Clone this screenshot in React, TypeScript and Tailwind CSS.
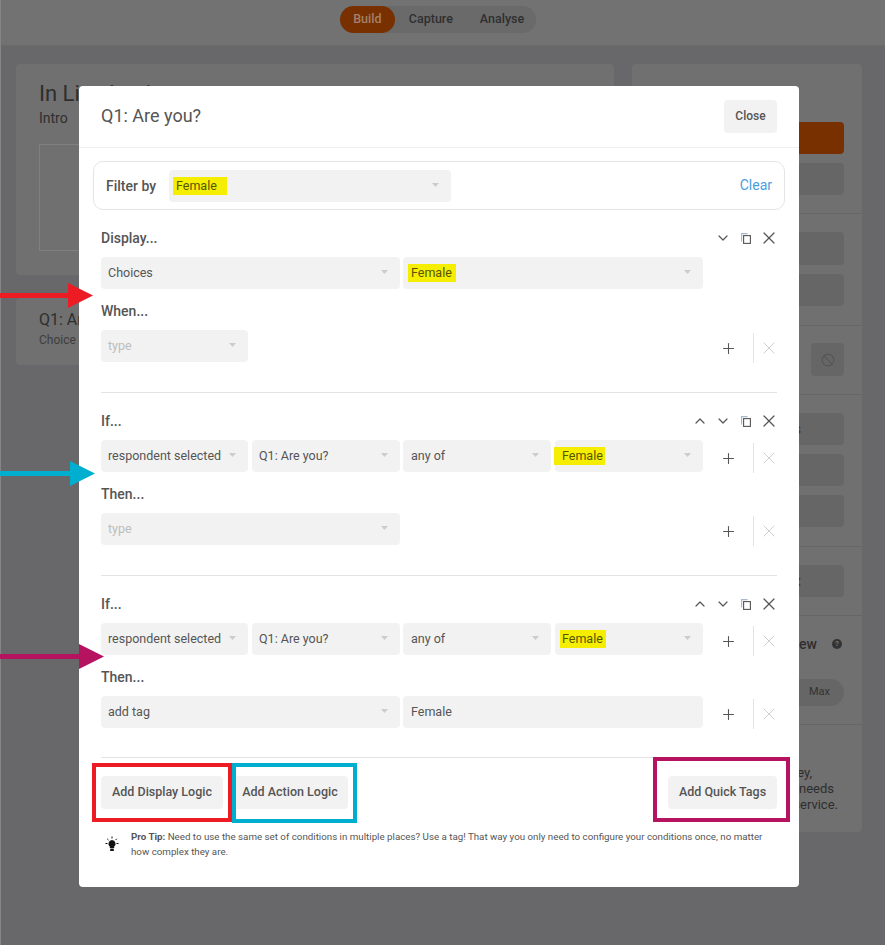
// App.tsx
import { ChevronDown, ChevronUp, Plus, X, Ban } from 'lucide-react';
import type { ReactNode } from 'react';

function Caret() {
    return (
        <svg width="7" height="4" viewBox="0 0 7 4" className="shrink-0 -translate-y-px">
            <path d="M0 0h7L3.5 4z" fill="#cccccc" />
        </svg>
    );
}

function Select({ className, label, muted, mark }: { className: string; label: string; muted?: boolean; mark?: string }) {
    return (
        <div className={`h-8 bg-[#f2f2f2] rounded flex items-center justify-between pr-[12px] text-[12.5px] ${muted ? 'text-[#bdbdbd]' : 'text-[#555555]'} ${className}`}>
            {mark ? <span className={`bg-[#f5ee00] text-[#555500] py-px leading-[16px] ${mark}`}>{label}</span> : <span>{label}</span>}
            <Caret />
        </div>
    );
}

function CopyIcon() {
    return (
        <svg width="10" height="11" viewBox="0 0 10 11" fill="none">
            <path d="M.6 8.5V.6h6" stroke="#a9b8cc" strokeWidth="1.2" />
            <rect x="2.6" y="2.6" width="6.8" height="7.8" stroke="#555555" strokeWidth="1.1" />
        </svg>
    );
}

function ToolCell({ children }: { children: ReactNode }) {
    return <div className="w-[23px] flex justify-center">{children}</div>;
}

function BlockTools({ up }: { up?: boolean }) {
    return (
        <div className="flex items-center text-[#555555] -mr-[3px]">
            {up && <ToolCell><ChevronUp size={16} strokeWidth={1.8} /></ToolCell>}
            <ToolCell><ChevronDown size={16} strokeWidth={1.8} /></ToolCell>
            <ToolCell><CopyIcon /></ToolCell>
            <ToolCell><X size={20} strokeWidth={1.5} /></ToolCell>
        </div>
    );
}

function RowTools() {
    return (
        <div className="w-[74px] shrink-0 h-8 flex items-center translate-y-[2px]">
            <div className="w-[50px] shrink-0 flex justify-center text-[#555555]">
                <Plus size={17} strokeWidth={1.5} />
            </div>
            <div className="w-[30px] shrink-0 h-[30px] border-l border-[#e3e3e3] flex items-center justify-center">
                <X size={20} strokeWidth={1.2} className="text-[#cfcfcf]" />
            </div>
        </div>
    );
}

function Heading({ children, tools }: { children: ReactNode; tools?: ReactNode }) {
    return (
        <div className="h-5 flex items-center justify-between text-sm font-medium text-[#555555] leading-5">
            <span>{children}</span>
            {tools}
        </div>
    );
}

function ConditionRow({ mark }: { mark: string }) {
    return (
        <div className="mt-[9px] flex items-center">
            <div className="w-[602px] flex">
                <Select className="w-[147px] pl-[7px]" label="respondent selected" />
                <Select className="w-[148px] ml-1 pl-[7px]" label="Q1: Are you?" />
                <Select className="w-[148px] ml-[3px] pl-[8px]" label="any of" />
                <Select className="w-[148px] ml-1 pl-[7px]" label="Female" mark={mark} />
            </div>
            <RowTools />
        </div>
    );
}

// hand drawn annotation arrows, tip is the x where the point ends
function Arrow({ className, color, tip }: { className: string; color: string; tip: number }) {
    return (
        <svg width={tip} height="25" className={`absolute left-0 ${className}`}>
            <path d={`M0 10h${tip - 25}V0l25 12.5-25 12.5V15H0z`} fill={color} />
        </svg>
    );
}

function Backdrop() {
    const btn = 'h-8 bg-[#666666] rounded flex items-center justify-end text-sm text-[#333333]';
    return (
        <div className="min-h-[945px] bg-[#68686a] border-l border-[#858585]">
            <div className="h-[46px] bg-[#727272] border-b border-[#6a6a6a] flex items-start justify-center pt-[6px]">
                <div className="flex items-center h-[27px] rounded-full bg-[#6a6a6a] text-[12.5px] font-medium text-[#2f2f2f] -ml-[10px]">
                    <span className="h-full w-[55px] rounded-full bg-[#783000] text-[#a4806a] flex items-center justify-center">Build</span>
                    <span className="ml-[14px]">Capture</span>
                    <span className="ml-[27px] mr-[12px]">Analyse</span>
                </div>
            </div>
            <div className="flex gap-[18px] items-start pl-[15px] pt-[18px]">
                <div className="w-[598px]">
                    <div className="h-[211px] bg-[#707070] rounded px-[23px] pt-[17px] text-[#2e2e2e]">
                        <div className="text-[22px] leading-[26px]">In Line Logic</div>
                        <div className="text-sm mt-px">Intro</div>
                        <div className="mt-4 h-[107px] border border-[#808080]" />
                    </div>
                    <div className="mt-[23px] h-[67px] bg-[#707070] rounded px-[23px] pt-[12px] text-[#2e2e2e]">
                        <div className="text-base leading-5">Q1: Are you?</div>
                        <div className="text-xs leading-5 text-[#3e3e3e]">Choice</div>
                    </div>
                </div>
                <div className="w-[230px] h-[768px] bg-[#707070] rounded">
                    <div className="px-[18px] pt-[58px] pb-[18px] border-b border-[#666666] space-y-[9px]">
                        <div className="h-8 bg-[#783000] rounded" />
                        <div className={btn} />
                    </div>
                    <div className="px-[18px] pt-[18px] pb-[19px] border-b border-[#666666] space-y-[9px]">
                        <div className={`${btn} h-[33px]`} />
                        <div className={btn} />
                    </div>
                    <div className="px-[18px] pt-[17px] pb-[18px] border-b border-[#666666] flex justify-end">
                        <div className="w-[33px] h-[33px] bg-[#666666] rounded flex items-center justify-center text-[#565656]">
                            <Ban size={14} />
                        </div>
                    </div>
                    <div className="px-[18px] pt-[18px] pb-[19px] border-b border-[#666666] space-y-[9px]">
                        <div className={`${btn} pr-[43px]`}>Tags</div>
                        <div className={btn} />
                        <div className={btn} />
                    </div>
                    <div className="px-[18px] py-[18px] border-b border-[#666666]">
                        <div className={`${btn} pr-[43px]`}>Inbox</div>
                    </div>
                    <div className="px-[18px] pt-[18px] pb-[18px] border-b border-[#666666]">
                        <div className="flex items-center justify-end text-sm font-medium text-[#2e2e2e] h-5">
                            Preview
                            <span className="ml-[15px] mr-[2px] w-[10px] h-[10px] rounded-full bg-[#333333] text-[#707070] text-[8px] font-bold flex items-center justify-center">?</span>
                        </div>
                        <div className="mt-[25px] h-[27px] bg-[#666666] rounded-full flex items-center justify-end pr-[14px] text-[11px] text-[#333333]">Max</div>
                    </div>
                    <div className="pl-[18px] pt-[40px] text-[13px] leading-4 text-[#2e2e2e] text-right">
                        <div className="pr-[50px]">survey,</div>
                        <div className="pr-[28px]">needs</div>
                        <div className="pr-[24px]">service.</div>
                    </div>
                </div>
            </div>
        </div>
    );
}

export default function App() {
    return (
        <div className="relative w-[885px] h-[945px] overflow-hidden font-['Roboto',sans-serif]">
            <Backdrop />

            <div className="absolute left-[79px] top-[86px] w-[720px] h-[801px] bg-white rounded">
                <div className="h-[62px] border-b border-[#eeeeee] flex items-center justify-between px-[22px] pb-[1px]">
                    <span className="text-lg text-[#555555] pb-px">Q1: Are you?</span>
                    <button className="w-[53px] h-[33px] bg-[#f2f2f2] rounded text-xs font-medium text-[#555555] pb-px">Close</button>
                </div>

                <div className="mx-[14px] mt-[13px] h-[49px] border border-[#e5e5e5] rounded-[10px] flex items-center px-3">
                    <span className="text-sm font-medium text-[#555555] w-[63px]">Filter by</span>
                    <Select className="w-[282px] pl-[7px]" label="Female" mark="-ml-[3px] pl-[3px] pr-[10px]" />
                    <span className="ml-auto text-sm text-[#4a9fe0] pb-px">Clear</span>
                </div>

                <div className="px-[22px] pt-[18px]">
                    <Heading tools={<BlockTools />}>Display...</Heading>
                    <div className="mt-[9px] flex gap-[3px]">
                        <Select className="w-[299px] pl-[7px]" label="Choices" />
                        <Select className="w-[300px] pl-[8px]" label="Female" mark="-ml-[3px] pl-[3px] pr-[4px]" />
                    </div>
                    <div className="mt-3">
                        <Heading>When...</Heading>
                    </div>
                    <div className="mt-[9px] flex items-center justify-between">
                        <Select className="w-[147px] pl-[7px]" label="type" muted />
                        <RowTools />
                    </div>
                    <div className="mt-[30px] border-t border-[#e3e3e3]" />

                    <div className="mt-[18px]">
                        <Heading tools={<BlockTools up />}>If...</Heading>
                    </div>
                    <ConditionRow mark="-ml-[8px] pl-[8px] pr-[2px]" />
                    <div className="mt-3">
                        <Heading>Then...</Heading>
                    </div>
                    <div className="mt-[9px] flex items-center justify-between">
                        <Select className="w-[299px] pl-[7px]" label="type" muted />
                        <RowTools />
                    </div>
                    <div className="mt-[30px] border-t border-[#e3e3e3]" />

                    <div className="mt-[18px]">
                        <Heading tools={<BlockTools up />}>If...</Heading>
                    </div>
                    <ConditionRow mark="-ml-[2px] pl-[2px] pr-[3px]" />
                    <div className="mt-3">
                        <Heading>Then...</Heading>
                    </div>
                    <div className="mt-[9px] flex items-center justify-between">
                        <div className="flex gap-[3px]">
                            <Select className="w-[299px] pl-[7px]" label="add tag" />
                            <div className="w-[300px] h-8 bg-[#f2f2f2] rounded flex items-center pl-[8px] text-[12.5px] text-[#555555]">Female</div>
                        </div>
                        <RowTools />
                    </div>
                    <div className="mt-[29px] border-t border-[#e3e3e3]" />

                    <div className="mt-[18px] flex items-center text-[12.5px] font-medium text-[#555555]">
                        <button className="w-[122px] h-[33px] bg-[#f2f2f2] rounded pb-px">Add Display Logic</button>
                        <button className="ml-[9px] w-[116px] h-[33px] bg-[#f2f2f2] rounded pb-px">Add Action Logic</button>
                        <button className="ml-auto w-[109px] h-[33px] bg-[#f2f2f2] rounded pb-px">Add Quick Tags</button>
                    </div>

                    <div className="mt-[20px] flex items-center">
                        <svg width="16" height="16" viewBox="0 0 16 16" className="ml-[3px] mr-[11px] shrink-0">
                            <path d="M8 4a3.6 3.6 0 0 0-2.2 6.4V12h4.4v-1.6A3.6 3.6 0 0 0 8 4z" fill="#111111" />
                            <rect x="6.2" y="12.6" width="3.6" height="2.4" fill="#111111" />
                            <path d="M8 .5v2M1.5 7.5h2M12.5 7.5h2M3.2 2.8l1.3 1.3M12.8 2.8l-1.3 1.3" stroke="#111111" strokeWidth="1" />
                        </svg>
                        <p className="text-[9.75px] leading-[15px] text-[#555555] w-[650px]">
                            <b className="font-bold">Pro Tip:</b> Need to use the same set of conditions in multiple places? Use a tag! That way you only need to configure your conditions once, no matter how complex they are.
                        </p>
                    </div>
                </div>
            </div>

            {/* annotations drawn on top of the screenshot */}
            <Arrow className="top-[283px]" color="#ed1c24" tip={93} />
            <Arrow className="top-[461px]" color="#00aed0" tip={95} />
            <Arrow className="top-[644px]" color="#b5135f" tip={104} />
            <div className="absolute left-[92px] top-[763px] w-[140px] h-[59px] border-4 border-[#ed1c24]" />
            <div className="absolute left-[232px] top-[763px] w-[125px] h-[60px] border-4 border-[#00aed0]" />
            <div className="absolute left-[653px] top-[757px] w-[137px] h-[65px] border-4 border-[#b5135f]" />
        </div>
    );
}
